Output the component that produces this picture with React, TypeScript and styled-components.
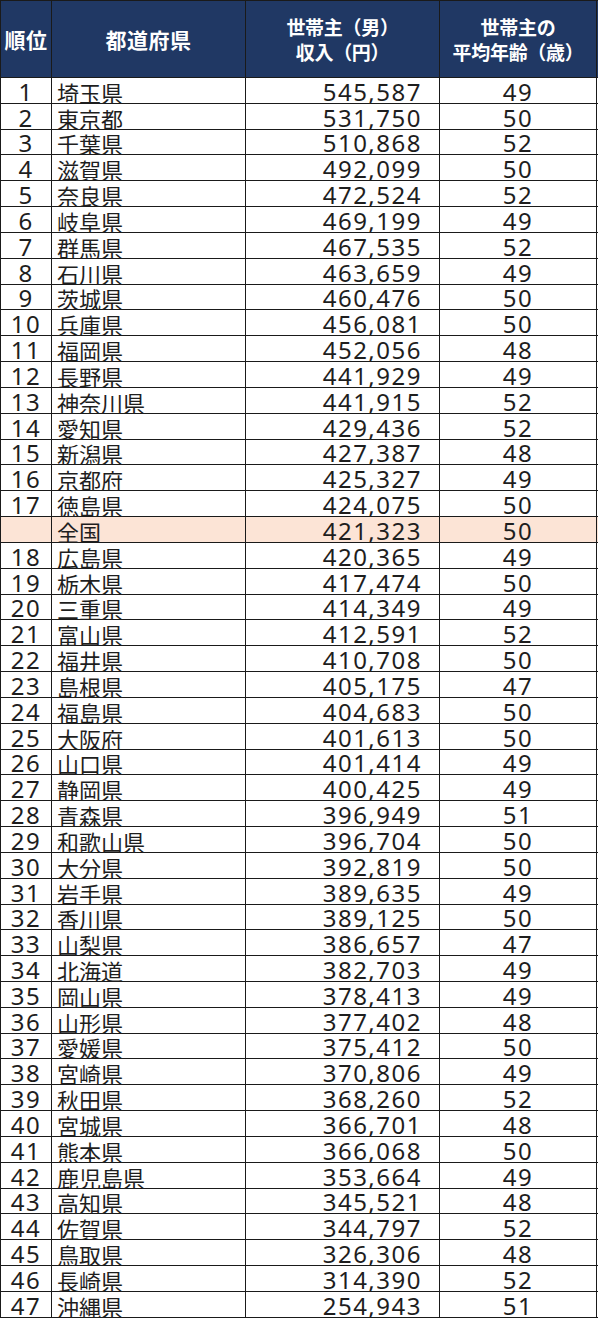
import React from "react";
import styled, { createGlobalStyle } from "styled-components";

const GlobalStyle = createGlobalStyle`
  html, body {
    margin: 0;
    padding: 0;
    background: #ffffff;
  }
  body {
    font-family: "Noto Sans CJK JP", "Noto Sans", sans-serif;
  }
`;

const rows: [string, string, string, string][] = [
  ["1", "埼玉県", "545,587", "49"],
  ["2", "東京都", "531,750", "50"],
  ["3", "千葉県", "510,868", "52"],
  ["4", "滋賀県", "492,099", "50"],
  ["5", "奈良県", "472,524", "52"],
  ["6", "岐阜県", "469,199", "49"],
  ["7", "群馬県", "467,535", "52"],
  ["8", "石川県", "463,659", "49"],
  ["9", "茨城県", "460,476", "50"],
  ["10", "兵庫県", "456,081", "50"],
  ["11", "福岡県", "452,056", "48"],
  ["12", "長野県", "441,929", "49"],
  ["13", "神奈川県", "441,915", "52"],
  ["14", "愛知県", "429,436", "52"],
  ["15", "新潟県", "427,387", "48"],
  ["16", "京都府", "425,327", "49"],
  ["17", "徳島県", "424,075", "50"],
  ["", "全国", "421,323", "50"],
  ["18", "広島県", "420,365", "49"],
  ["19", "栃木県", "417,474", "50"],
  ["20", "三重県", "414,349", "49"],
  ["21", "富山県", "412,591", "52"],
  ["22", "福井県", "410,708", "50"],
  ["23", "島根県", "405,175", "47"],
  ["24", "福島県", "404,683", "50"],
  ["25", "大阪府", "401,613", "50"],
  ["26", "山口県", "401,414", "49"],
  ["27", "静岡県", "400,425", "49"],
  ["28", "青森県", "396,949", "51"],
  ["29", "和歌山県", "396,704", "50"],
  ["30", "大分県", "392,819", "50"],
  ["31", "岩手県", "389,635", "49"],
  ["32", "香川県", "389,125", "50"],
  ["33", "山梨県", "386,657", "47"],
  ["34", "北海道", "382,703", "49"],
  ["35", "岡山県", "378,413", "49"],
  ["36", "山形県", "377,402", "48"],
  ["37", "愛媛県", "375,412", "50"],
  ["38", "宮崎県", "370,806", "49"],
  ["39", "秋田県", "368,260", "52"],
  ["40", "宮城県", "366,701", "48"],
  ["41", "熊本県", "366,068", "50"],
  ["42", "鹿児島県", "353,664", "49"],
  ["43", "高知県", "345,521", "48"],
  ["44", "佐賀県", "344,797", "52"],
  ["45", "鳥取県", "326,306", "48"],
  ["46", "長崎県", "314,390", "52"],
  ["47", "沖縄県", "254,943", "51"],
];

const Table = styled.div`
  width: 597px;
  border-top: 1px solid #1a1a1a;
  border-left: 1px solid #1a1a1a;
  display: flex;
  flex-direction: column;
`;

const Row = styled.div<{ $header?: boolean; $total?: boolean }>`
  display: grid;
  grid-template-columns: 51px 194px 194px 157px;
  height: ${(p) => (p.$header ? "76px" : "24.83px")};
  background: ${(p) => (p.$header ? "#203864" : p.$total ? "#fce4d6" : "#ffffff")};
  border-bottom: 1px solid #1a1a1a;
`;

const HeadCell = styled.div<{ $small?: boolean }>`
  display: flex;
  align-items: center;
  justify-content: center;
  text-align: center;
  color: #ffffff;
  font-weight: 700;
  font-size: ${(p) => (p.$small ? "19px" : "21px")};
  line-height: 25px;
  letter-spacing: ${(p) => (p.$small ? "-0.3px" : "0.5px")};
  border-right: 1px solid #1a1a1a;
  white-space: nowrap;
`;

const Cell = styled.div<{ $align: "left" | "right" | "center" }>`
  display: flex;
  align-items: flex-end;
  justify-content: ${(p) =>
    p.$align === "left" ? "flex-start" : p.$align === "right" ? "flex-end" : "center"};
  padding: ${(p) =>
    p.$align === "left" ? "0 0 0 5px" : p.$align === "right" ? "0 17px 0 0" : "0"};
  border-right: 1px solid #1a1a1a;
  color: #1e1e1e;
  white-space: nowrap;
`;

const NumText = styled.span`
  display: inline-block;
  font-family: "Noto Sans", "DejaVu Sans", sans-serif;
  font-size: 24px;
  line-height: 22px;
  letter-spacing: 1.5px;
`;

const NameText = styled.span`
  display: inline-block;
  font-family: "Noto Sans CJK JP", sans-serif;
  font-size: 22px;
  line-height: 22px;
`;

export default function App() {
  return (
    <>
      <GlobalStyle />
      <Table>
        <Row $header>
          <HeadCell>順位</HeadCell>
          <HeadCell>都道府県</HeadCell>
          <HeadCell $small>
            世帯主（男）
            <br />
            収入（円）
          </HeadCell>
          <HeadCell $small>
            世帯主の
            <br />
            平均年齢（歳）
          </HeadCell>
        </Row>
        {rows.map(([rank, name, income, age], i) => (
          <Row key={i} $total={rank === ""}>
            <Cell $align="center">
              <NumText>{rank}</NumText>
            </Cell>
            <Cell $align="left">
              <NameText>{name}</NameText>
            </Cell>
            <Cell $align="right">
              <NumText>{income}</NumText>
            </Cell>
            <Cell $align="center">
              <NumText>{age}</NumText>
            </Cell>
          </Row>
        ))}
      </Table>
    </>
  );
}
